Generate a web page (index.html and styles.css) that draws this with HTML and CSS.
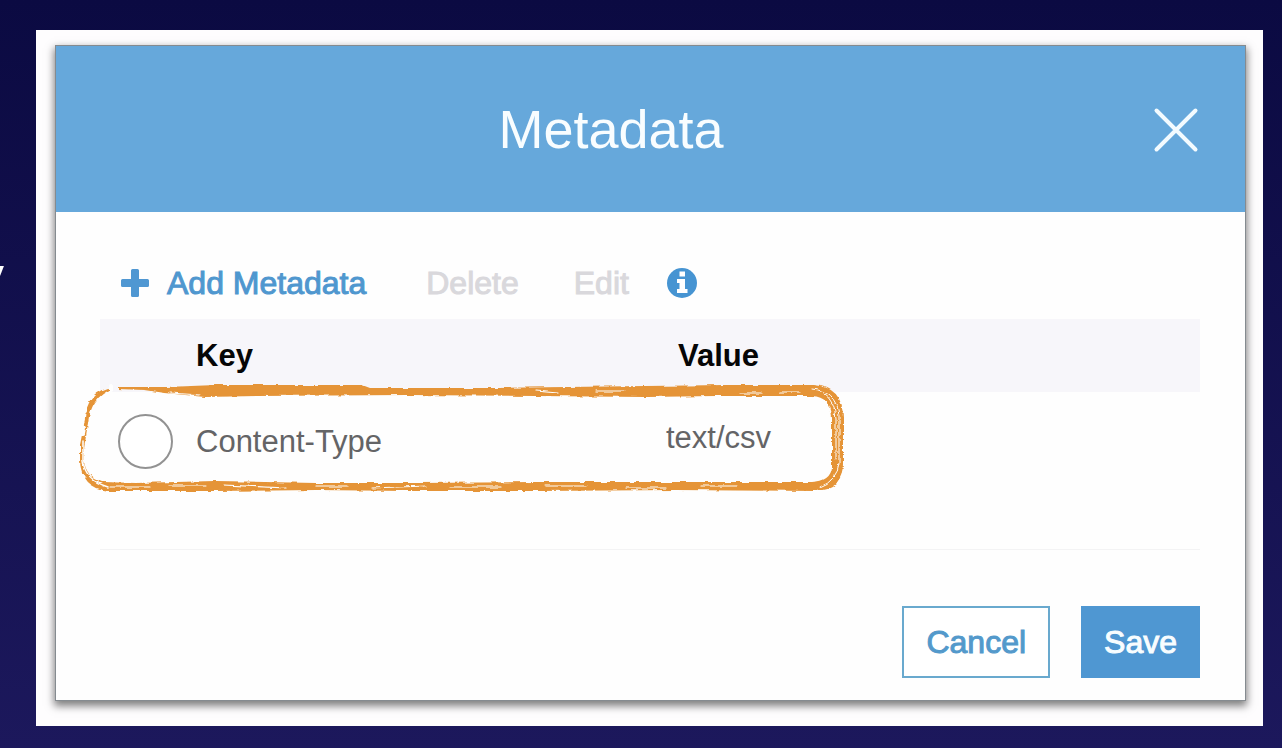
FILE: index.html
```html
<!DOCTYPE html>
<html lang="en">
<head>
<meta charset="utf-8">
<title>Metadata</title>
<link rel="stylesheet" href="styles.css">
</head>
<body>
<main class="slide">
  <span class="slide-text">y</span>
  <div class="frame">
    <section class="dialog" role="dialog" aria-labelledby="dialog-title">
      <header class="dialog-header">
        <h1 class="dialog-title" id="dialog-title">Metadata</h1>
        <button class="close" type="button" aria-label="Close">
          <svg viewBox="0 0 48 48" width="48" height="48"><path d="M4.500 5.500L43.500 44.500M43.500 5.500L4.500 44.500" fill="none" stroke="#f3fbff" stroke-width="4" stroke-linecap="round"/></svg>
        </button>
      </header>
      <div class="dialog-body">
        <div class="toolbar">
          <button class="tool add" type="button">
            <svg viewBox="0 0 28 28" width="28" height="28"><path d="M11.500 0h5q1.500 0 1.500 1.500V10h8.500q1.500 0 1.500 1.500v5q0 1.500-1.500 1.500H18v8.500q0 1.500-1.500 1.500h-5q-1.500 0-1.500-1.500V18H1.500Q0 18 0 16.500v-5Q0 10 1.500 10H10V1.500Q10 0 11.500 0z" fill="#4f97d2"/></svg>
            Add Metadata
          </button>
          <button class="tool delete" type="button" disabled>Delete</button>
          <button class="tool edit" type="button" disabled>Edit</button>
          <button class="tool info" type="button" aria-label="Information">
            <svg viewBox="0 0 30 30" width="30" height="30"><circle cx="15" cy="15" r="15" fill="#4694d2"/><path d="M12.500 3.500h5.500v5h-5.500zM10 11h8v10h2.500v4H10v-4h2.500v-6H10z" fill="#fff"/></svg>
          </button>
        </div>
        <div class="table-wrap">
          <table class="grid">
            <colgroup><col class="col-pick"><col class="col-key"><col class="col-value"><col></colgroup>
            <thead>
              <tr><td></td><th class="key" scope="col">Key</th><th class="value" scope="col">Value</th><td></td></tr>
            </thead>
            <tbody>
              <tr>
                <td class="pick"><input class="radio" type="radio" name="row" id="row-1"></td>
                <td class="key"><label for="row-1">Content-Type</label></td>
                <td class="value">text/csv</td>
                <td></td>
              </tr>
            </tbody>
          </table>
          <svg class="brush" viewBox="0 0 770 112" preserveAspectRatio="none" aria-hidden="true">
            <defs>
              <filter id="rough" x="-2%" y="-10%" width="104%" height="120%" color-interpolation-filters="sRGB">
                <feTurbulence type="fractalNoise" baseFrequency="0.08 0.2" numOctaves="3" seed="8" result="n"/>
                <feDisplacementMap in="SourceGraphic" in2="n" scale="4" xChannelSelector="R" yChannelSelector="G"/>
              </filter>
            </defs>
            <g filter="url(#rough)" fill="#e59437" stroke="none">
              <path d="M43 8L90 8L140 6L286 6L294 9L330 9L420 9L490 8L570 7L650 6L738 6Q767 8 767 38V84Q767 111 740 112L600 111L460 112L330 112L240 111L140 112L32 112Q5 108 4 82V66L9 40Q10 16 32 9L36 10Q15 18 12 44L8 70V82Q10 98 26 103L60 104L140 102L240 104L340 104L460 103L600 103L736 103Q755 102 756 88V38Q755 18 736 17L640 17L570 18L460 17L330 16L180 17L130 18L88 14L68 11L43 10Z"/>
              <g fill="none" stroke="#fefefe" stroke-linecap="round">
                <path d="M7 62V82Q9 101 32 108" stroke-width="1.500"/>
                <path d="M34 108H74M92 107H130M148 106L210 109M240 107H272M296 109L350 107M374 108H425M470 107H510M550 109H590M625 107H660" stroke-width="1.200"/>
                <path d="M94 14L124 16M460 11L482 13M520 12H548M664 14H686M704 13H724" stroke-width="1.200"/>
                <path d="M736 10Q760 12 763 36V84Q761 102 744 108M748 15Q759 22 760 40V80" stroke-width="1"/>
                <path d="M9 26V31M8 49L7 54M35 8V11" stroke-width="4"/>
              </g>
            </g>
          </svg>
        </div>
        <footer class="actions">
          <button class="btn" type="button">Cancel</button>
          <button class="btn primary" type="button">Save</button>
        </footer>
      </div>
    </section>
  </div>
</main>
</body>
</html>
```
FILE: styles.css
```css
* { box-sizing: border-box; }
body { margin: 0; font-family: "Liberation Sans", Arial, sans-serif; }
button { font: inherit; cursor: pointer; }
svg { display: block; }
.slide {
  position: relative;
  display: grid;
  min-height: 100vh;
  padding: 30px 19px 22px 36px;
  overflow: hidden;
  background: linear-gradient(#0b0a42, #1c185c);
}
.slide-text {
  position: absolute;
  right: calc(100% - 4px);
  top: 245px;
  font-size: 54px;
  line-height: 60px;
  color: #fff;
}
.frame { display: grid; padding: 15px 17px 25px 19px; background: #fefdfe; }
.dialog {
  display: flex;
  flex-direction: column;
  border: 1px solid #858b90;
  background: #fefefe;
  box-shadow: 0 4px 8px 1px rgba(0, 0, 0, .5);
}
.dialog-header {
  display: flex;
  align-items: center;
  height: 166px;
  padding: 0 45px 0 14px;
  background: #66a8db;
}
.dialog-title {
  flex: 1;
  margin: 0;
  font-size: 54px;
  font-weight: 400;
  line-height: 60px;
  text-align: center;
  color: #f8fdff;
}
.close { padding: 0; border: 0; background: none; }
.dialog-body { display: flex; flex: 1; flex-direction: column; padding: 52px 45px 22px 44px; }
.toolbar { display: flex; align-items: center; height: 38px; margin-bottom: 17px; padding-left: 21px; }
.tool {
  display: flex;
  align-items: center;
  padding: 0;
  border: 0;
  background: none;
  font-size: 32px;
  line-height: 36px;
  color: #4f97cf;
  -webkit-text-stroke: 1px;
}
.tool:disabled { color: #d9d8dc; }
.add { gap: 18px; }
.delete { margin-left: 60px; }
.edit { margin-left: 55px; }
.info { margin-left: 38px; }
.table-wrap { position: relative; flex: 1; border-bottom: 1px solid #f3f3f4; }
.grid { width: 100%; table-layout: fixed; border-collapse: collapse; font-size: 31px; line-height: 36px; color: #646466; }
.grid td, .grid th { padding: 0; }
.col-pick { width: 96px; }
.col-key { width: 37%; }
.col-value { width: 21%; }
.grid thead { background: #f7f6fa; }
.grid thead tr { height: 73px; }
.grid tbody tr { height: 99px; }
.grid th { font-size: 31px; color: #060606; }
.grid .key { text-align: left; }
.grid .value { text-align: center; }
.grid tbody .value { padding-bottom: 8px; }
.radio {
  display: block;
  appearance: none;
  width: 55px;
  height: 55px;
  margin: 0 0 0 18px;
  border: 2px solid #929292;
  border-radius: 50%;
  background: #fff;
}
.brush { position: absolute; left: -24px; top: 60px; width: 70%; height: 112px; overflow: visible; pointer-events: none; }
.actions { display: flex; justify-content: flex-end; gap: 31px; padding-top: 56px; }
.btn {
  height: 72px;
  padding: 0 22px;
  border: 2px solid #69a9ce;
  background: #fff;
  font-size: 32px;
  line-height: 36px;
  color: #5399cb;
  -webkit-text-stroke: 1px;
}
.primary { padding: 0 21px; border-color: #4f97d2; background: #4f97d2; color: #f8fdff; }
```
